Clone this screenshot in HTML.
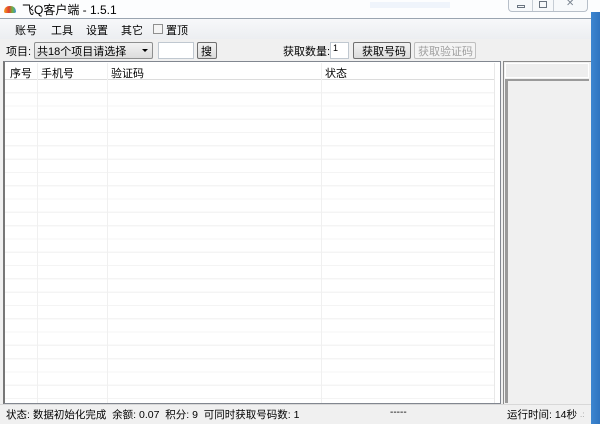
<!DOCTYPE html>
<html><head><meta charset="utf-8"><style>
*{margin:0;padding:0;box-sizing:border-box}
body{width:600px;height:424px;overflow:hidden;background:#f0f0f0;position:relative;font-family:"Liberation Sans","Noto Sans CJK SC",sans-serif;font-size:11px;color:#000}
.a{position:absolute}
.t{white-space:nowrap}
</style></head><body>
<div class="a" style="left:0;top:0;width:600px;height:19px;background:#fcfdfe"></div>
<div class="a" style="left:370px;top:2px;width:80px;height:6px;background:#e6eef9;opacity:.6"></div>
<div class="a" style="left:4px;top:6px;width:12px;height:7px;border-radius:6px 6px 2px 2px;background:linear-gradient(90deg,#f4a01e,#e23b2f 40%,#6db33f 70%,#3b8fd8)"></div>
<div class="a t" style="left:22px;top:1px;font-size:12px">飞Q客户端 - 1.5.1</div>
<div class="a" style="left:508px;top:0;width:80px;height:12px;border:1px solid #b7bfc9;border-top:none;border-radius:0 0 4px 4px;background:#f7f9fb"></div>
<div class="a" style="left:532px;top:0;width:1px;height:11px;background:#c6cdd5"></div>
<div class="a" style="left:553px;top:0;width:1px;height:11px;background:#c6cdd5"></div>
<div class="a" style="left:517px;top:5px;width:8px;height:3px;border:1px solid #6a7480"></div>
<div class="a" style="left:539px;top:1px;width:8px;height:7px;border:1px solid #6a7480"></div>
<div class="a t" style="left:566px;top:-2px;font-size:10px;color:#7a8490">✕</div>
<div class="a" style="left:591px;top:12px;width:9px;height:412px;background:linear-gradient(90deg,#3d86d0,#2f74c0)"></div>
<div class="a" style="left:0;top:18px;width:591px;height:1px;background:#9aa4b0"></div>
<div class="a" style="left:0;top:19px;width:591px;height:20px;background:linear-gradient(#f7f8fa,#eceef1)"></div>
<div class="a t" style="left:15px;top:22px">账号</div>
<div class="a t" style="left:51px;top:22px">工具</div>
<div class="a t" style="left:86px;top:22px">设置</div>
<div class="a t" style="left:121px;top:22px">其它</div>
<div class="a" style="left:153px;top:24px;width:10px;height:10px;border:1px solid #8f8f8f;background:#f4f4f4"></div>
<div class="a t" style="left:166px;top:22px">置顶</div>
<div class="a t" style="left:6px;top:43px">项目:</div>
<div class="a" style="left:34px;top:42px;width:119px;height:17px;border:1px solid #8e8f8f;border-radius:2px;background:linear-gradient(#f2f2f2,#dcdcdc)"></div>
<div class="a t" style="left:37px;top:43px">共18个项目请选择</div>
<div class="a" style="left:142px;top:49px;width:0;height:0;border-left:3px solid transparent;border-right:3px solid transparent;border-top:3px solid #000"></div>
<div class="a" style="left:158px;top:42px;width:36px;height:17px;border:1px solid #c0c8d0;background:#fff"></div>
<div class="a" style="left:197px;top:42px;width:20px;height:17px;border:1px solid #707070;border-radius:2px;background:linear-gradient(#f2f2f2,#dcdcdc)"></div>
<div class="a t" style="left:201px;top:43px">搜</div>
<div class="a t" style="left:283px;top:43px">获取数量:</div>
<div class="a" style="left:330px;top:42px;width:19px;height:17px;border:1px solid #c0c8d0;background:#fff"></div>
<div class="a t" style="left:333px;top:43px;font-size:9px">1</div>
<div class="a" style="left:353px;top:42px;width:58px;height:17px;border:1px solid #707070;border-radius:2px;background:linear-gradient(#f2f2f2,#dcdcdc)"></div>
<div class="a t" style="left:362px;top:43px">获取号码</div>
<div class="a" style="left:414px;top:42px;width:62px;height:17px;border:1px solid #bfbfbf;border-radius:2px;background:#f4f4f4"></div>
<div class="a t" style="left:418px;top:43px;color:#a0a0a0">获取验证码</div>
<div class="a" style="left:3px;top:61px;width:498px;height:343px;border:1px solid #828790;border-left:2px solid #777;background:#fff;
background-image:repeating-linear-gradient(#fff 0 12px,#f4f4f4 12px 13.3px);background-position:0 18px"></div>
<div class="a" style="left:5px;top:63px;width:490px;height:17px;background:#fff;border-bottom:1px solid #dcdcdc"></div>
<div class="a" style="left:37px;top:63px;width:1px;height:340px;background:#f0f0f0"></div>
<div class="a" style="left:107px;top:63px;width:1px;height:340px;background:#f0f0f0"></div>
<div class="a" style="left:321px;top:63px;width:1px;height:340px;background:#f0f0f0"></div>
<div class="a" style="left:494px;top:63px;width:1px;height:340px;background:#e8e8e8"></div>
<div class="a t" style="left:10px;top:65px">序号</div>
<div class="a t" style="left:41px;top:65px">手机号</div>
<div class="a t" style="left:111px;top:65px">验证码</div>
<div class="a t" style="left:325px;top:65px">状态</div>
<div class="a" style="left:495px;top:62px;width:5px;height:341px;background:#fff"></div>
<div class="a" style="left:503px;top:61px;width:88px;height:343px;border-left:1px solid #8a8a8a;border-top:1px solid #8a8a8a;background:#f0f0f0"></div>
<div class="a" style="left:505px;top:63px;width:84px;height:15px;border:1px solid #fff;background:#eeeeee"></div>
<div class="a" style="left:505px;top:79px;width:84px;height:2px;background:#9a9a9a"></div>
<div class="a" style="left:505px;top:81px;width:3px;height:322px;background:#9a9a9a"></div>
<div class="a" style="left:0;top:404px;width:591px;height:20px;background:#f0f0f0;border-top:1px solid #d8d8d8"></div>
<div class="a t" style="left:6px;top:407px;font-size:10.5px">状态: 数据初始化完成 &nbsp;余额: 0.07 &nbsp;积分: 9 &nbsp;可同时获取号码数: 1</div>
<div class="a t" style="left:390px;top:407px;font-size:10px">-----</div>
<div class="a t" style="left:507px;top:407px;font-size:10.5px">运行时间: 14秒</div>
<div class="a t" style="left:580px;top:410px;font-size:8px;color:#999">.:</div>
</body></html>
